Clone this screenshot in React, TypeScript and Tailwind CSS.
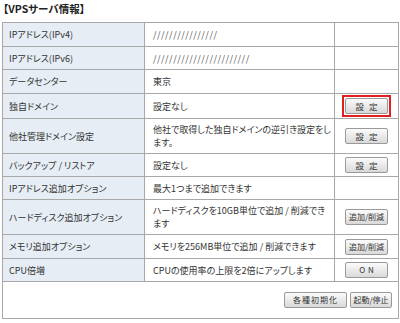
import React from "react";

const font = "font-['Noto_Sans_CJK_JP','Noto_Sans',sans-serif]";

function Btn({ children, w = "w-[43px]", red = false }: { children: React.ReactNode; w?: string; red?: boolean }) {
  const b = (
    <div
      className={`${w} h-[16px] flex items-center justify-center rounded-[2px] border border-[#9a9a9a] bg-gradient-to-b from-[#fbfbfb] to-[#d9d9d9] text-[8px] text-[#333] leading-none`}
    >
      {children}
    </div>
  );
  if (red) {
    return <div className="border-2 border-[#e0201e] p-[1px]">{b}</div>;
  }
  return b;
}

type Row = { label: string; value: React.ReactNode; btn?: React.ReactNode; h: string };

const setBtn = <span className="tracking-[5px] pl-[5px] text-[8.5px]">設定</span>;

const rows: Row[] = [
  { label: "IPアドレス(IPv4)", value: <span className="tracking-[0.5px] text-[#555]">////////////////</span>, h: "h-[24px]" },
  { label: "IPアドレス(IPv6)", value: <span className="tracking-[0.5px] text-[#555]">////////////////////////</span>, h: "h-[23px]" },
  { label: "データセンター", value: "東京", h: "h-[24px]" },
  { label: "独自ドメイン", value: "設定なし", btn: <Btn red>{setBtn}</Btn>, h: "h-[25px]" },
  {
    label: "他社管理ドメイン設定",
    value: (
      <>
        他社で取得した独自ドメインの逆引き設定をし
        <br />
        ます。
      </>
    ),
    btn: <Btn>{setBtn}</Btn>,
    h: "h-[35px]",
  },
  { label: "バックアップ / リストア", value: "設定なし", btn: <Btn>{setBtn}</Btn>, h: "h-[23px]" },
  { label: "IPアドレス追加オプション", value: "最大1つまで追加できます", h: "h-[23px]" },
  {
    label: "ハードディスク追加オプション",
    value: (
      <>
        ハードディスクを10GB単位で追加 / 削減でき
        <br />
        ます
      </>
    ),
    btn: <Btn>追加/削減</Btn>,
    h: "h-[35px]",
  },
  { label: "メモリ追加オプション", value: "メモリを256MB単位で追加 / 削減できます", btn: <Btn>追加/削減</Btn>, h: "h-[24px]" },
  { label: "CPU倍増", value: "CPUの使用率の上限を2倍にアップします", btn: <Btn><span className="tracking-[3px] pl-[3px]">ON</span></Btn>, h: "h-[23px]" },
];

export default function App() {
  return (
    <div className={`w-[400px] h-[323px] bg-white ${font} text-[9px] leading-[13px] text-[#333] [font-feature-settings:'palt']`}>
      <div className="pl-[3px] pt-[2px] h-[22px] font-bold text-[10.5px] leading-[14px] text-[#222]">【VPSサーバ情報】</div>
      <table className="ml-[2px] w-[396px] border-collapse table-fixed">
        <colgroup>
          <col className="w-[142px]" />
          <col className="w-[190px]" />
          <col className="w-[64px]" />
        </colgroup>
        <tbody>
          {rows.map((r, i) => (
            <tr key={i} className={r.h}>
              <td className="border border-[#a8a8a8] bg-[#e6edf5] pl-[6px] align-middle">{r.label}</td>
              <td className="border border-[#a8a8a8] pl-[8px] pr-0 align-middle whitespace-nowrap">{r.value}</td>
              <td className="border border-[#a8a8a8] align-middle">
                <div className="flex justify-center">{r.btn}</div>
              </td>
            </tr>
          ))}
          <tr className="h-[37px]">
            <td colSpan={3} className="border border-[#a8a8a8] align-middle">
              <div className="flex justify-end gap-[3px] pr-[6px]">
                <Btn w="w-[63px]"><span className="tracking-[1px]">各種初期化</span></Btn>
                <Btn w="w-[42px]">起動/停止</Btn>
              </div>
            </td>
          </tr>
        </tbody>
      </table>
    </div>
  );
}
